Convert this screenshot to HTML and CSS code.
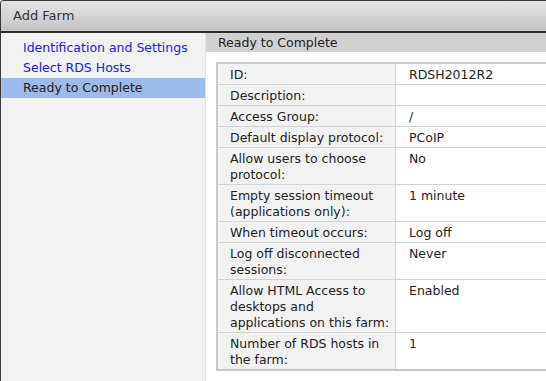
FILE: index.html
```html
<!DOCTYPE html>
<html lang="en">
<head>
    <meta charset="UTF-8">
    <title>Add Farm</title>
    <link rel="stylesheet" href="styles.css">
</head>
<body>
    <div class="window">
        <div class="titlebar">Add Farm</div>
        <div class="content">
            <div class="steps">
                <a class="step" href="#">Identification and Settings</a>
                <a class="step" href="#">Select RDS Hosts</a>
                <div class="step current">Ready to Complete</div>
            </div>
            <div class="panel">
                <div class="panel-head">Ready to Complete</div>
                <div class="panel-body">
                    <table class="summary">
                        <tr><td class="label">ID:</td><td>RDSH2012R2</td></tr>
                        <tr><td class="label">Description:</td><td></td></tr>
                        <tr><td class="label">Access Group:</td><td>/</td></tr>
                        <tr><td class="label">Default display protocol:</td><td>PCoIP</td></tr>
                        <tr><td class="label">Allow users to choose protocol:</td><td>No</td></tr>
                        <tr><td class="label">Empty session timeout (applications only):</td><td>1 minute</td></tr>
                        <tr><td class="label">When timeout occurs:</td><td>Log off</td></tr>
                        <tr><td class="label">Log off disconnected sessions:</td><td>Never</td></tr>
                        <tr><td class="label">Allow HTML Access to desktops and applications on this farm:</td><td>Enabled</td></tr>
                        <tr><td class="label">Number of RDS hosts in the farm:</td><td>1</td></tr>
                    </table>
                </div>
            </div>
        </div>
    </div>
</body>
</html>
```

FILE: styles.css
```css
html, body {
    margin: 0;
    height: 100%;
    overflow: hidden;
}
body {
    font-family: "DejaVu Sans", Verdana, sans-serif;
    font-size: 12.5px;
    color: #222;
    background: #fff;
}
.window {
    display: flex;
    flex-direction: column;
    height: 100%;
    border-top: 1px solid #3a3a3a;
    border-left: 1px solid #3a3a3a;
    border-top-left-radius: 4px;
    box-sizing: border-box;
}
.titlebar {
    height: 30px;
    line-height: 30px;
    padding-left: 12px;
    font-size: 13px;
    color: #333;
    background: linear-gradient(#e4e4e6, #d6d6d8 45%, #c2c2c4);
    border-bottom: 2px solid #2e2e2e;
    border-top-left-radius: 3px;
    flex-shrink: 0;
}
.content {
    display: flex;
    flex: 1;
    min-height: 0;
}
.steps {
    width: 204px;
    flex-shrink: 0;
    background: #f2f2f2;
    border-right: 1px solid #e2e2e2;
    padding-top: 5px;
}
.step {
    display: block;
    height: 20px;
    line-height: 20px;
    padding-left: 22px;
    color: #2121e0;
    text-decoration: none;
}
.step.current {
    color: #222;
    background: #9dbbea;
}
.panel {
    flex: 1;
    min-width: 0;
    overflow: hidden;
}
.panel-head {
    height: 19px;
    line-height: 19px;
    padding-left: 12px;
    background: #d0d0d0;
}
.panel-body {
    padding: 10px 0 0 10px;
}
.summary {
    width: 400px;
    border-collapse: collapse;
    border: 2px solid #c8c8c8;
}
.summary td {
    border: 1px solid #d2d2d2;
    padding: 3px 12px 1px 13px;
    line-height: 16px;
    vertical-align: top;
}
.summary td.label {
    width: 160px;
    padding-left: 12px;
    padding-right: 5px;
    background: #f2f2f2;
}
```
